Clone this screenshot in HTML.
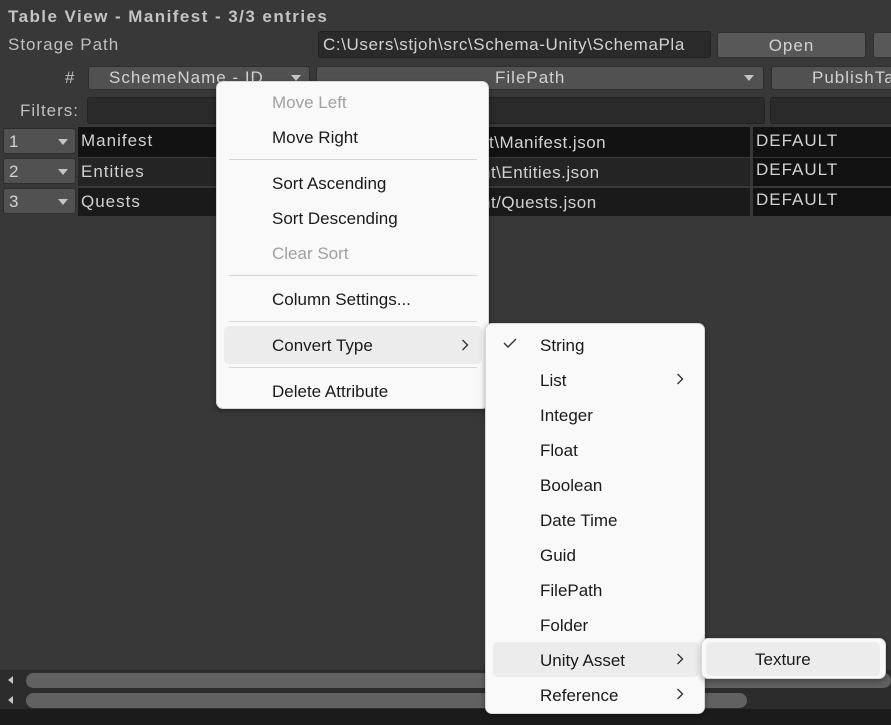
<!DOCTYPE html>
<html><head><meta charset="utf-8"><style>
*{box-sizing:border-box;margin:0;padding:0}
body{width:891px;height:725px;background:#383838;font-family:"Liberation Sans",sans-serif;color:#c8c8c8;position:relative;overflow:hidden;font-size:17px}
.a{position:absolute;white-space:nowrap}
.ls{letter-spacing:1px}
.fld{position:absolute;background:#2a2a2a;border:1px solid #212121;border-radius:3px}
.btn{position:absolute;background:#585858;border:1px solid #303030;border-radius:3px;text-align:center;color:#d2d2d2;letter-spacing:1px}
.dd{position:absolute;background:#515151;border:1px solid #2e2e2e;border-radius:3px;letter-spacing:1px}
.cell{position:absolute;background:#1e1e1e;color:#d2d2d2;padding-left:3px;letter-spacing:1px}
.tri{position:absolute;width:0;height:0;border-left:5px solid transparent;border-right:5px solid transparent;border-top:6px solid #c4c4c4}
.menu{position:absolute;background:#f9f9f9;border:1px solid #d8d8d8;border-radius:7px;box-shadow:0 2px 6px rgba(0,0,0,.35);color:#1a1a1a}
.mi{position:absolute;font-size:17px;white-space:nowrap}
.dis{color:#a0a0a0}
.sep{position:absolute;height:1px;background:#d6d6d6}
.hl{position:absolute;background:#ececec;border-radius:5px}
.chev{position:absolute;width:8px;height:12px}
</style></head><body>
<div class="a" style="left:8px;top:7px;font-weight:bold;font-size:17px;color:#c4c4c4;letter-spacing:1.45px">Table View - Manifest - 3/3 entries</div>
<div class="a ls" style="left:8px;top:35px;color:#c0c0c0">Storage Path</div>
<div class="fld ls" style="left:318px;top:31px;width:393px;height:27px;color:#d2d2d2;padding:3px 4px;overflow:hidden;font-size:17px;letter-spacing:0.6px">C:\Users\stjoh\src\Schema-Unity\SchemaPla</div>
<div class="btn" style="left:717px;top:32px;width:149px;height:26px;line-height:25px">Open</div>
<div class="btn" style="left:873px;top:32px;width:30px;height:26px"></div>
<div class="a" style="left:65px;top:68px;color:#c0c0c0">#</div>
<div class="dd" style="left:88px;top:66px;width:222px;height:24px"><span class="a" style="left:20px;top:1px;color:#d2d2d2">SchemeName - ID</span><div class="tri" style="left:202px;top:8px"></div></div>
<div class="dd" style="left:316px;top:66px;width:448px;height:24px"><span class="a" style="left:178px;top:1px;color:#d2d2d2">FilePath</span><div class="tri" style="left:427px;top:8px"></div></div>
<div class="dd" style="left:771px;top:66px;width:130px;height:24px"><span class="a" style="left:40px;top:1px;color:#d2d2d2">PublishTa</span></div>
<div class="a ls" style="left:20px;top:101px;color:#c0c0c0">Filters:</div>
<div class="fld" style="left:87px;top:97px;width:678px;height:27px"></div>
<div class="fld" style="left:770px;top:97px;width:130px;height:27px"></div>
<div class="dd" style="left:3px;top:128px;width:73px;height:26px"><span class="a" style="left:5px;top:3px;color:#d2d2d2">1</span><div class="tri" style="left:54px;top:10px"></div></div>
<div class="dd" style="left:3px;top:158px;width:73px;height:26px"><span class="a" style="left:5px;top:3px;color:#d2d2d2">2</span><div class="tri" style="left:54px;top:10px"></div></div>
<div class="dd" style="left:3px;top:188px;width:73px;height:26px"><span class="a" style="left:5px;top:3px;color:#d2d2d2">3</span><div class="tri" style="left:54px;top:10px"></div></div>
<div class="cell" style="left:78px;top:127px;width:672px;height:30px;padding-top:4px;background:#121212">Manifest</div>
<div class="cell" style="left:78px;top:158px;width:672px;height:28px;padding-top:4px;background:#242424">Entities</div>
<div class="cell" style="left:78px;top:188px;width:672px;height:28px;padding-top:4px;background:#1a1a1a">Quests</div>
<div class="a ls" style="left:489px;top:133px;color:#d2d2d2;letter-spacing:0.5px">t\Manifest.json</div>
<div class="a ls" style="left:481px;top:163px;color:#d2d2d2;letter-spacing:0.5px">nt\Entities.json</div>
<div class="a ls" style="left:481px;top:193px;color:#d2d2d2;letter-spacing:0.5px">nt/Quests.json</div>
<div class="cell" style="left:753px;top:127px;width:138px;height:30px;padding-top:4px;background:#121212">DEFAULT</div>
<div class="cell" style="left:753px;top:158px;width:138px;height:28px;padding-top:2px;background:#121212">DEFAULT</div>
<div class="cell" style="left:753px;top:188px;width:138px;height:28px;padding-top:2px;background:#121212">DEFAULT</div>
<div class="a" style="left:0;top:670px;width:891px;height:20px;background:#2c2c2c"></div>
<div class="a" style="left:26px;top:673px;width:865px;height:15px;background:#616161;border-radius:8px"></div>
<div class="a" style="left:0;top:690px;width:891px;height:19px;background:#2c2c2c"></div>
<div class="a" style="left:26px;top:693px;width:721px;height:15px;background:#616161;border-radius:8px"></div>
<div class="a" style="left:8px;top:676px;width:0;height:0;border-top:4px solid transparent;border-bottom:4px solid transparent;border-right:5px solid #c4c4c4"></div>
<div class="a" style="left:8px;top:696px;width:0;height:0;border-top:4px solid transparent;border-bottom:4px solid transparent;border-right:5px solid #c4c4c4"></div>
<div class="a" style="left:0;top:709px;width:891px;height:16px;background:#1b1b1b"></div>

<div class="menu" style="left:216px;top:81px;width:273px;height:328px">
<div class="hl" style="left:7px;top:244px;width:258px;height:38px"></div>
<div class="mi dis" style="left:55px;top:11px">Move Left</div>
<div class="mi" style="left:55px;top:46px">Move Right</div>
<div class="sep" style="left:12px;top:77px;width:248px"></div>
<div class="mi" style="left:55px;top:92px">Sort Ascending</div>
<div class="mi" style="left:55px;top:127px">Sort Descending</div>
<div class="mi dis" style="left:55px;top:162px">Clear Sort</div>
<div class="sep" style="left:12px;top:193px;width:248px"></div>
<div class="mi" style="left:55px;top:208px">Column Settings...</div>
<div class="sep" style="left:12px;top:239px;width:248px"></div>
<div class="mi" style="left:55px;top:254px">Convert Type</div>
<svg class="chev" style="left:244px;top:257px" viewBox="0 0 8 12"><polyline points="1.5,1 6.5,6 1.5,11" fill="none" stroke="#333" stroke-width="1.4"/></svg>
<div class="sep" style="left:12px;top:285px;width:248px"></div>
<div class="mi" style="left:55px;top:300px">Delete Attribute</div>
</div>

<div class="menu" style="left:485px;top:323px;width:220px;height:391px">
<div class="hl" style="left:7px;top:318px;width:206px;height:35px"></div>
<svg class="a" style="left:17px;top:14px" width="14" height="10" viewBox="0 0 14 10"><polyline points="1,5 5,9 13,1" fill="none" stroke="#333" stroke-width="1.4"/></svg>
<div class="mi" style="left:54px;top:12px">String</div>
<div class="mi" style="left:54px;top:47px">List</div><svg class="chev" style="left:190px;top:49px" viewBox="0 0 8 12"><polyline points="1.5,1 6.5,6 1.5,11" fill="none" stroke="#333" stroke-width="1.4"/></svg>
<div class="mi" style="left:54px;top:82px">Integer</div>
<div class="mi" style="left:54px;top:117px">Float</div>
<div class="mi" style="left:54px;top:152px">Boolean</div>
<div class="mi" style="left:54px;top:187px">Date Time</div>
<div class="mi" style="left:54px;top:222px">Guid</div>
<div class="mi" style="left:54px;top:257px">FilePath</div>
<div class="mi" style="left:54px;top:292px">Folder</div>
<div class="mi" style="left:54px;top:327px">Unity Asset</div><svg class="chev" style="left:190px;top:329px" viewBox="0 0 8 12"><polyline points="1.5,1 6.5,6 1.5,11" fill="none" stroke="#333" stroke-width="1.4"/></svg>
<div class="mi" style="left:54px;top:362px">Reference</div><svg class="chev" style="left:190px;top:364px" viewBox="0 0 8 12"><polyline points="1.5,1 6.5,6 1.5,11" fill="none" stroke="#333" stroke-width="1.4"/></svg>
</div>

<div class="menu" style="left:701px;top:638px;width:185px;height:41px">
<div class="hl" style="left:4px;top:3px;width:174px;height:34px"></div>
<div class="mi" style="left:53px;top:11px">Texture</div>
</div>
</body></html>
